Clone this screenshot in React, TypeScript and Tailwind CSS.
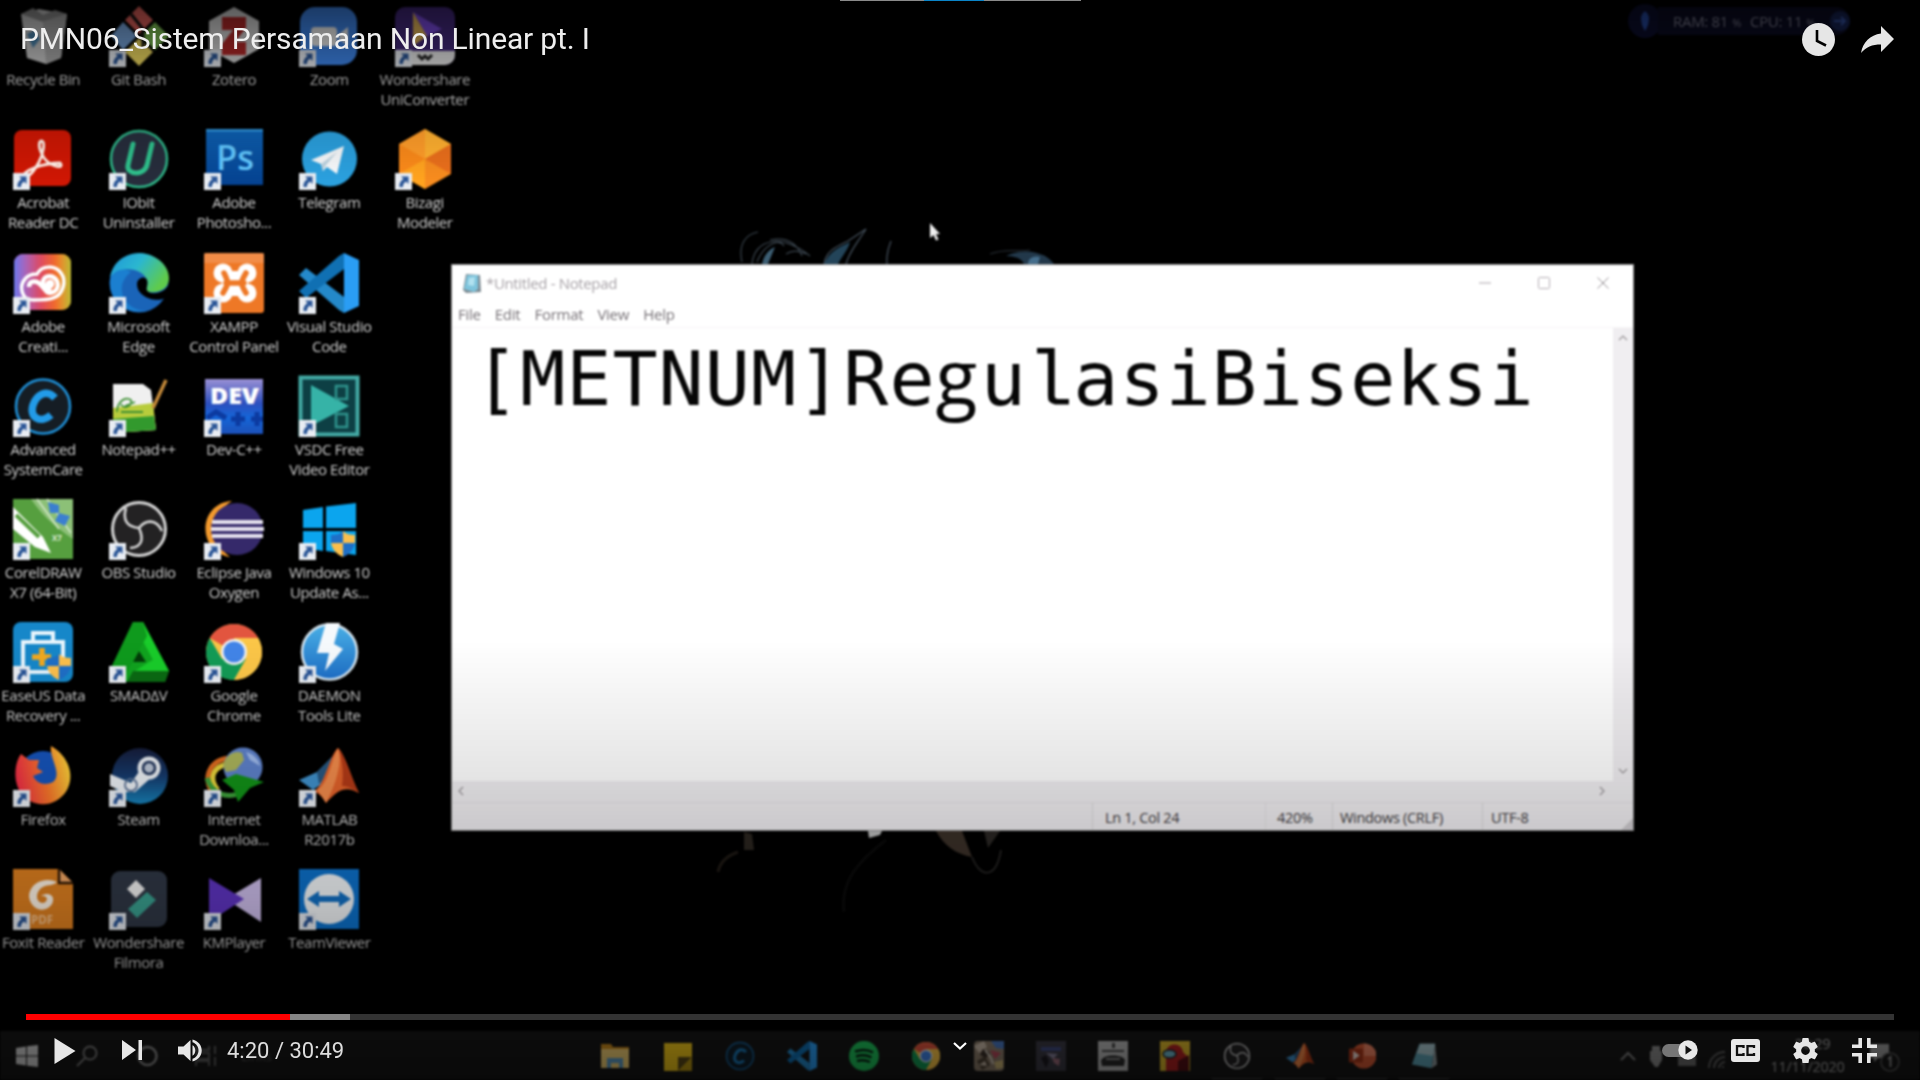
import React from "react";
import type { ReactNode } from "react";

const UI = "font-['Open_Sans','Noto_Sans',sans-serif]";

const Shield = ({ x, y, s = 1 }: { x: number; y: number; s?: number }) => (
  <g transform={`translate(${x} ${y}) scale(${s})`}>
    <path d="M12 0C9 3 5 4 0 4V12H12Z" fill="#1f6fc6" />
    <path d="M12 0C15 3 19 4 24 4V12H12Z" fill="#fbbf4c" />
    <path d="M0 12H12V26C5 23 1 18 0 12Z" fill="#fbbf4c" />
    <path d="M24 12H12V26C19 23 23 18 24 12Z" fill="#1f6fc6" />
  </g>
);

const VsCode = () => (
  <g>
    <path d="M0 22L7 15L45 44V60L40 57Z" fill="#2489ca" />
    <path d="M0 38L7 45L45 16V0L40 3Z" fill="#1070b3" />
    <path d="M45 0L60 7V53L45 60Z" fill="#2a9df4" />
  </g>
);

const Chrome = () => (
  <g>
    <circle cx="30" cy="30" r="28" fill="#f7c548" />
    <path d="M30 30L5.7 16A28 28 0 0 1 54.3 16H30Z" fill="#e2553f" />
    <path d="M5.7 16A28 28 0 0 0 30 58L42 37L30 30L18 37Z" fill="#139b56" />
    <path d="M30 58L42 37L44 30L42 20L30 16H54.3A28 28 0 0 1 30 58Z" fill="#fbc648" />
    <circle cx="30" cy="30" r="13" fill="#f1f1f1" />
    <circle cx="30" cy="30" r="10.5" fill="#4285e8" />
  </g>
);

const Obs = () => (
  <g fill="none" stroke="#d5d5d5" strokeWidth="2.6">
    <circle cx="30" cy="30" r="26.5" fill="#232223" strokeWidth="3" />
    <path d="M17 9C13 22 19 28 30 29" />
    <path d="M53 32C47 19 36 21 30 29" />
    <path d="M21 49C35 48 34 38 30 29" />
  </g>
);

const Matlab = () => (
  <g>
    <path d="M0 34L18 26L34 10L28 34L14 44Z" fill="#3f8fc9" />
    <path d="M18 26L34 10L30 30L20 38Z" fill="#27567f" />
    <path d="M14 46C26 40 30 10 39 2C46 8 52 32 60 47C48 40 40 42 27 57C24 52 20 46 14 46Z" fill="#e0612a" />
    <path d="M39 2C43 12 40 32 27 57C24 52 20 46 18 44C30 38 32 14 39 2Z" fill="#f08a4b" />
    <path d="M39 2C48 12 52 32 60 47C52 41 46 40 43 40C45 26 43 12 39 2Z" fill="#b23a17" />
  </g>
);

const art: Record<string, ReactNode> = {
  bin: (
    <g>
      <path d="M8 8L26 3L54 8L48 52L33 58L14 52Z" fill="#c9c9c9" />
      <path d="M8 8L30 16L54 8L42 4L30 9L20 2Z" fill="#8f8f8f" />
      <path d="M30 16L33 58L48 52L54 8Z" fill="#aaa" />
      <path d="M14 28L22 24L27 33L20 42Z" fill="#4b84ad" />
    </g>
  ),
  git: (
    <g>
      <path d="M30 0L44 14L30 28L16 14Z" fill="#e2625c" />
      <path d="M14 16L28 30L14 44L2 30Z" fill="#79a7de" />
      <path d="M46 16L60 30L46 44L32 30Z" fill="#7cbd52" />
      <path d="M30 32L44 46L30 60L16 46Z" fill="#f2dc62" />
      <path d="M22 8L34 23V42" stroke="#111" strokeWidth="3" fill="none" />
    </g>
  ),
  zotero: (
    <g>
      <path d="M30 1L55 15V43L30 57L5 43V15Z" fill="#d6d6d6" />
      <path d="M18 11H42V22L31 36H42V49H18V38L29 24H18Z" fill="#b52a2a" />
    </g>
  ),
  zoom: (
    <g>
      <rect x="1" y="1" width="57" height="58" rx="15" fill="#3f87ec" />
      <rect x="12" y="21" width="26" height="19" rx="4" fill="#f1f1f1" />
      <path d="M40 28L49 21V40L40 33Z" fill="#f1f1f1" />
    </g>
  ),
  uniconv: (
    <g>
      <rect x="0" y="1" width="60" height="58" rx="10" fill="#43297c" />
      <path d="M18 6L47 23L32 30Z" fill="#7b4be0" />
      <path d="M18 6V40L32 30Z" fill="#e2b45a" />
      <path d="M0 45H60V49A10 10 0 0 1 50 59H0Z" fill="#e8e8e8" />
      <path d="M23 49L27 53L30 50L33 53L37 49" stroke="#222" strokeWidth="3" fill="none" />
    </g>
  ),
  acrobat: (
    <g>
      <rect x="1" y="1" width="57" height="56" rx="8" fill="#cf1704" />
      <path
        d="M11 48C8 42 30 34 47 34C52 40 39 39 31 29C24 17 26 12 29 12C32 13 31 23 26 33C20 44 14 50 11 48Z"
        fill="none"
        stroke="#fff0e8"
        strokeWidth="2.8"
      />
    </g>
  ),
  iobit: (
    <g>
      <circle cx="30" cy="30" r="28" fill="#272d3c" stroke="#2fb588" strokeWidth="2.6" />
      <path
        d="M24 15L19 36C17 46 35 47 38 36L43 15"
        fill="none"
        stroke="#2fc08c"
        strokeWidth="5"
        strokeLinecap="round"
      />
    </g>
  ),
  ps: (
    <g>
      <rect x="2" y="0" width="57" height="56" fill="url(#psg)" />
      <rect x="2" y="0" width="57" height="2.5" fill="#2f93da" />
      <text
        x="12"
        y="41"
        fontFamily="Open Sans"
        fontWeight="600"
        fontSize="34"
        textLength="38"
        lengthAdjust="spacingAndGlyphs"
        fill="#63c8ff"
      >
        Ps
      </text>
    </g>
  ),
  telegram: (
    <g>
      <circle cx="30.500" cy="30" r="27.500" fill="#2ba0de" />
      <path d="M12 31L45 17L38 45L28 38L24 42L22 35Z" fill="#f6f8fa" />
      <path d="M22 35L38 23L27 36L24 42Z" fill="#bcd2df" />
    </g>
  ),
  bizagi: (
    <g>
      <path d="M30 0L56 15V45L30 60L4 45V15Z" fill="#f78c1f" />
      <path d="M30 0L56 15L30 30Z" fill="#ffb030" />
      <path d="M30 0L4 15L30 30Z" fill="#ff9d2a" />
      <path d="M4 15L30 30L4 45Z" fill="#fb8a1a" />
      <path d="M30 30L4 45L30 60Z" fill="#ffa31f" />
      <path d="M30 30L56 15V45Z" fill="#ea6f1c" />
    </g>
  ),
  cc: (
    <g>
      <rect x="1" y="1" width="57" height="56" rx="9" fill="url(#ccg)" />
      <rect x="1" y="1" width="57" height="56" rx="9" fill="url(#ccb)" />
      <path
        d="M20 47C8 47 6 33 12 26C15 22 20 21 24 21C29 12 42 12 48 20C54 28 50 42 40 45C36 47 26 47 20 47Z"
        fill="none"
        stroke="#fff"
        strokeWidth="3.500"
      />
      <path d="M16 34C16 27 24 27 28 32L34 39C40 42 47 36 44 28C40 21 31 22 30 29C30 32 34 36 38 38" fill="none" stroke="#fff" strokeWidth="4.500" />
      <circle cx="37" cy="31" r="4.500" fill="#fff" />
    </g>
  ),
  edge: (
    <g>
      <circle cx="30" cy="30" r="29.500" fill="#1a64b8" />
      <path d="M1 24C4 8 17 0 31 0C48 1 60 13 60 25C60 35 52 40 40 39C34 38 40 34 38 27C34 16 14 11 1 24Z" fill="url(#edg)" />
      <path d="M22 19C4 32 14 58 38 58C14 62 0 46 1 27C4 16 16 14 22 19Z" fill="#1b7fd0" />
      <path d="M60 29C62 36 57 43 57 45C46 50 28 44 28 31C28 25 36 22 38 27C40 34 34 37 42 40C52 41 59 36 60 29Z" fill="#000" />
    </g>
  ),
  xampp: (
    <g>
      <rect x="0" y="0" width="60" height="60" rx="3" fill="#ee7826" />
      <rect x="0" y="0" width="60" height="10" fill="#f39a5e" opacity=".6" />
      <rect x="18" y="18" width="26" height="25" fill="#fff" />
      <circle cx="19" cy="20" r="9.500" fill="#fff" />
      <circle cx="43" cy="20" r="9.500" fill="#fff" />
      <circle cx="19" cy="40" r="9.500" fill="#fff" />
      <circle cx="43" cy="40" r="9.500" fill="#fff" />
      <path
        d="M20 20C25 30 25 30 19 40M42 20C36 30 36 30 42 40M22 30H40"
        stroke="#ee7826"
        strokeWidth="5.500"
        strokeLinecap="round"
        fill="none"
      />
    </g>
  ),
  vscode: <VsCode />,
  asc: (
    <g>
      <circle cx="30" cy="30.500" r="27" fill="#151d24" stroke="#1f8fd6" strokeWidth="2.6" />
      <path d="M42 22C34 13 24 18 20 29C16 42 28 48 38 39" fill="none" stroke="#229be8" strokeWidth="7.500" />
    </g>
  ),
  npp: (
    <g>
      <path d="M4 8H34L42 14L47 54L4 57Z" fill="#f0f0f0" />
      <path d="M4 32L44 27L47 54L4 57Z" fill="#b8cc3c" />
      <path d="M4 43L45 40L47 54L4 57Z" fill="#32992d" />
      <path d="M8 36C8 26 16 20 22 24C24 30 14 34 12 28M12 36H34M16 30L26 26" stroke="#3c8f32" strokeWidth="1.800" fill="none" />
      <path d="M57 4L44 32" stroke="#c58a3a" strokeWidth="3.500" />
    </g>
  ),
  dev: (
    <g>
      <rect x="1" y="3" width="58" height="55" fill="url(#dvg)" />
      <text x="6" y="28" fontFamily="Open Sans" fontWeight="800" fontSize="23" textLength="49" lengthAdjust="spacingAndGlyphs" fill="#fff">
        DEV
      </text>
      <path d="M3 42L12 36L22 42M34 36V50M27 43H41M53 36V50M47 43H59" stroke="#0c3aa0" strokeWidth="5" fill="none" />
    </g>
  ),
  vsdc: (
    <g>
      <rect x="1.500" y="1.500" width="57" height="57" fill="#0d3f44" stroke="#43a9a4" strokeWidth="4" />
      <path d="M12 9L50 30L12 50Z" fill="#36b3a7" />
      <rect x="37" y="10" width="11" height="13" fill="none" stroke="#2f938c" strokeWidth="2.500" />
      <rect x="37" y="38" width="11" height="13" fill="none" stroke="#2f938c" strokeWidth="2.500" />
    </g>
  ),
  corel: (
    <g>
      <rect width="60" height="60" fill="#569f3f" />
      <path d="M18 0H60V40C45 30 30 18 18 0Z" fill="#8cc077" />
      <path d="M24 0L46 30M34 0L58 34" stroke="#c9e2bd" strokeWidth="2" />
      <path d="M0 8L30 38L38 54L22 48L0 30Z" fill="#fff" />
      <path d="M3 16L26 38" stroke="#569f3f" strokeWidth="4" />
      <path d="M35 3L46 6V14L37 14ZM46 14L57 17L52 27L42 22Z" fill="#3b7fd0" />
      <text x="39" y="42" fontFamily="Open Sans" fontWeight="700" fontSize="8" fill="#dcebd5">
        X7
      </text>
    </g>
  ),
  obs: <Obs />,
  eclipse: (
    <g>
      <path d="M28 2C-6 4 -8 52 26 58C6 44 8 14 28 2Z" fill="#f39a2d" />
      <circle cx="33" cy="30" r="26" fill="#35296a" />
      <path d="M8 23H59M7 30H60M8 37H59" stroke="#e6e2ef" strokeWidth="3.800" />
    </g>
  ),
  win10: (
    <g>
      <path d="M4 11L24 8V29H4ZM27 7.500L57 4V29H27ZM4 32H24V52L4 49ZM27 32H57V56L27 52Z" fill="#0ba5ee" />
      <Shield x={32} y={32} />
    </g>
  ),
  easeus: (
    <g>
      <rect width="60" height="60" rx="8" fill="#1687c9" />
      <path d="M20 20V11H40V20M10 20H50V50H10Z" fill="none" stroke="#e9f5fc" strokeWidth="4" />
      <path d="M29 26V44M19 35H38" stroke="#f2a91f" strokeWidth="5.500" />
      <Shield x={34} y={32} />
    </g>
  ),
  smadav: (
    <g>
      <path d="M24 0H34L60 49L56 60H18L2 46Z" fill="#11a31f" />
      <path d="M34 0L60 49H26L40 40L44 38L28 8Z" fill="#19cc2a" />
      <path d="M24 0H34L38 14L18 50L8 58L2 46Z" fill="#0f9a1d" />
      <path d="M30 29L37 40H24Z" fill="#033a08" />
      <path d="M24 49H60L56 60H18Z" fill="#0b6913" />
    </g>
  ),
  chrome: <Chrome />,
  daemon: (
    <g>
      <circle cx="30.500" cy="30" r="27.500" fill="url(#dmg)" stroke="#d9e8f2" strokeWidth="2.500" />
      <path d="M27 1H41L35 22L44 27L26 49L30 31L18 31Z" fill="#f5f9fc" />
    </g>
  ),
  firefox: (
    <g>
      <circle cx="30" cy="30" r="25" fill="#1653b8" />
      <path
        d="M8 8L16 14L26 14L24 22L30 26L20 30C24 38 32 40 40 36C50 28 36 12 38 0C56 10 62 30 54 44C42 64 16 62 6 44C0 32 2 16 8 8Z"
        fill="url(#ffg)"
      />
    </g>
  ),
  steam: (
    <g>
      <circle cx="31" cy="30" r="28" fill="url(#stg)" />
      <path d="M1 28L22 37L34 20L44 30L26 46L14 46L1 40Z" fill="#e9edf2" />
      <circle cx="40" cy="22" r="11.500" fill="#e9edf2" />
      <circle cx="40" cy="22" r="6" fill="#b8c2d2" stroke="#22355a" strokeWidth="2.500" />
      <circle cx="22" cy="39" r="6" fill="none" stroke="#5b7193" strokeWidth="1.800" />
    </g>
  ),
  idm: (
    <g>
      <g fill="none" strokeWidth="5">
        <path d="M26 12C4 14 -2 34 10 48" stroke="#dd6b20" />
        <path d="M28 17C8 20 4 32 14 44" stroke="#e5d13a" />
        <path d="M3 32C8 48 22 52 34 48" stroke="#3d9e3a" />
      </g>
      <circle cx="39" cy="21" r="19.500" fill="#5d80c8" />
      <path d="M20 16C24 7 32 4 38 7L40 14L32 24L22 26C20 22 19 20 20 16Z" fill="#a9b25a" />
      <path d="M42 6C50 8 55 14 56 20L46 14Z" fill="#9db8e8" />
      <path d="M18 34L32 28L60 36L46 42L34 56L30 44Z" fill="#129018" />
    </g>
  ),
  matlab: <Matlab />,
  foxit: (
    <g>
      <path d="M0 0H46L60 14V60H0Z" fill="#df8020" />
      <path d="M46 0V14H60" fill="#f3a765" stroke="#2b1605" strokeWidth="2.400" />
      <path d="M44 13C34 8 18 12 16 26C16 40 32 46 39 35C43 27 36 22 28 27C36 26 35 33 30 34C22 34 22 22 30 18C36 15 40 17 44 13Z" fill="#fff4e6" />
      <text x="18" y="55" fontFamily="Open Sans" fontWeight="700" fontSize="11.500" fill="#f7c38d">
        PDF
      </text>
    </g>
  ),
  filmora: (
    <g>
      <rect x="2" y="2" width="56" height="56" rx="9" fill="#303846" />
      <path d="M27 11L36 20L27 29L18 20Z" fill="#f2f2f2" />
      <path d="M38 23L47 31L28 49L19 40Z" fill="#3aa090" />
    </g>
  ),
  kmp: (
    <g>
      <path d="M57 9V53L22 30Z" fill="#cdbdeb" />
      <path d="M5 9L40 30L5 53Z" fill="#5f35c2" />
    </g>
  ),
  teamviewer: (
    <g>
      <rect width="60" height="60" fill="#0d72cc" />
      <circle cx="30" cy="30" r="25" fill="#f3f6f9" />
      <path d="M8 30L20 22V27H40V22L52 30L40 38V33H20V38Z" fill="#1270c4" />
    </g>
  ),
};

type Item = { icon: string; label: string[]; plain?: boolean };

const columns: Item[][] = [
  [
    { icon: "bin", label: ["Recycle Bin"], plain: true },
    { icon: "acrobat", label: ["Acrobat", "Reader DC"] },
    { icon: "cc", label: ["Adobe", "Creati..."] },
    { icon: "asc", label: ["Advanced", "SystemCare"] },
    { icon: "corel", label: ["CorelDRAW", "X7 (64-Bit)"] },
    { icon: "easeus", label: ["EaseUS Data", "Recovery ..."] },
    { icon: "firefox", label: ["Firefox"] },
    { icon: "foxit", label: ["Foxit Reader"] },
  ],
  [
    { icon: "git", label: ["Git Bash"] },
    { icon: "iobit", label: ["IObit", "Uninstaller"] },
    { icon: "edge", label: ["Microsoft", "Edge"] },
    { icon: "npp", label: ["Notepad++"] },
    { icon: "obs", label: ["OBS Studio"] },
    { icon: "smadav", label: ["SMADΔV"] },
    { icon: "steam", label: ["Steam"] },
    { icon: "filmora", label: ["Wondershare", "Filmora"] },
  ],
  [
    { icon: "zotero", label: ["Zotero"] },
    { icon: "ps", label: ["Adobe", "Photosho..."] },
    { icon: "xampp", label: ["XAMPP", "Control Panel"] },
    { icon: "dev", label: ["Dev-C++"] },
    { icon: "eclipse", label: ["Eclipse Java", "Oxygen"] },
    { icon: "chrome", label: ["Google", "Chrome"] },
    { icon: "idm", label: ["Internet", "Downloa..."] },
    { icon: "kmp", label: ["KMPlayer"] },
  ],
  [
    { icon: "zoom", label: ["Zoom"] },
    { icon: "telegram", label: ["Telegram"] },
    { icon: "vscode", label: ["Visual Studio", "Code"] },
    { icon: "vsdc", label: ["VSDC Free", "Video Editor"] },
    { icon: "win10", label: ["Windows 10", "Update As..."] },
    { icon: "daemon", label: ["DAEMON", "Tools Lite"] },
    { icon: "matlab", label: ["MATLAB", "R2017b"] },
    { icon: "teamviewer", label: ["TeamViewer"] },
  ],
  [
    { icon: "uniconv", label: ["Wondershare", "UniConverter"] },
    { icon: "bizagi", label: ["Bizagi", "Modeler"] },
  ],
];

const Gradients = () => (
  <svg className="absolute size-0">
    <defs>
      <linearGradient id="psg" x1="0" y1="0" x2="0" y2="1">
        <stop offset="0" stopColor="#0e62b4" />
        <stop offset="1" stopColor="#05418f" />
      </linearGradient>
      <linearGradient id="ccg" x1="0" y1="0" x2="1" y2="0">
        <stop offset="0" stopColor="#f04bb4" />
        <stop offset="0.4" stopColor="#f03a42" />
        <stop offset="0.7" stopColor="#f5532a" />
        <stop offset="1" stopColor="#f0a02c" />
      </linearGradient>
      <linearGradient id="ccb" x1="0" y1="1" x2="1" y2="1">
        <stop offset="0" stopColor="#5d7df0" stopOpacity="0.9" />
        <stop offset="0.5" stopColor="#b070c0" stopOpacity="0.25" />
        <stop offset="0.75" stopColor="#e0c030" stopOpacity="0.2" />
        <stop offset="1" stopColor="#8fc83a" stopOpacity="0.6" />
      </linearGradient>
      <linearGradient id="edg" x1="0" y1="0" x2="1" y2="0.5">
        <stop offset="0" stopColor="#1f96d8" />
        <stop offset="0.5" stopColor="#2bb7d0" />
        <stop offset="1" stopColor="#5fcb4c" />
      </linearGradient>
      <linearGradient id="dvg" x1="0" y1="0" x2="0" y2="1">
        <stop offset="0" stopColor="#9a90d4" />
        <stop offset="0.45" stopColor="#2c4fbe" />
        <stop offset="0.7" stopColor="#1566d8" />
        <stop offset="1" stopColor="#1c50b8" />
      </linearGradient>
      <linearGradient id="dmg" x1="0" y1="0" x2="0" y2="1">
        <stop offset="0" stopColor="#49aee4" />
        <stop offset="1" stopColor="#1d6fc8" />
      </linearGradient>
      <linearGradient id="ffg" x1="0" y1="0.4" x2="1" y2="0.2">
        <stop offset="0" stopColor="#ee2f45" />
        <stop offset="0.5" stopColor="#f8762a" />
        <stop offset="1" stopColor="#fbd83a" />
      </linearGradient>
      <linearGradient id="stg" x1="0" y1="0" x2="0" y2="1">
        <stop offset="0" stopColor="#161d3a" />
        <stop offset="0.5" stopColor="#163a6c" />
        <stop offset="1" stopColor="#1781b8" />
      </linearGradient>
    </defs>
  </svg>
);

const Shortcut = () => (
  <svg viewBox="0 0 17 17" className="absolute bottom-[-1px] left-0 size-[17px]">
    <rect width="17" height="17" fill="#e9edf3" />
    <path d="M6 3.500H13.500V11L11 8.500C8.500 10 8 11.500 8 14H4.500C4 10.500 5.500 8 8.500 6Z" fill="#2a5596" />
  </svg>
);

const DesktopIcon = ({ item }: { item: Item }) => (
  <div className="flex h-[123.300px] w-[95.400px] flex-col items-center">
    <div className="relative size-[60px]">
      <svg viewBox="0 0 60 60" className="size-[60px] overflow-visible">
        {art[item.icon]}
      </svg>
      {!item.plain && <Shortcut />}
    </div>
    <div className="mt-[3px] flex flex-col items-center whitespace-nowrap text-[15px] leading-[20px] tracking-[-0.400px] text-[#cfcfcf]">
      {item.label.map((l) => (
        <span key={l}>{l}</span>
      ))}
    </div>
  </div>
);

const Wallpaper = () => (
  <svg viewBox="0 0 1920 1080" className="absolute inset-0 size-full" fill="none">
    <g stroke="#46525e" strokeWidth="1.200">
      <path d="M742 262C738 244 746 234 758 232M752 264C754 240 780 232 810 256M757 262C764 244 780 238 784 246M770 240C790 236 798 246 802 256M786 254C792 250 798 250 806 254" opacity=".8" />
      <path d="M824 264C826 250 838 246 848 241L866 229C858 242 850 250 846 264" />
      <path d="M887 264C886 254 889 246 891 241" />
      <path d="M990 254C1004 248 1018 252 1030 250" opacity=".5" />
    </g>
    <path d="M824 264C830 250 842 246 850 242C848 250 842 256 838 264Z" fill="#234459" />
    <path d="M762 264C764 254 770 249 775 247L768 264Z" fill="#3d5f74" />
    <path d="M1006 256C1024 247 1046 252 1054 264H1024C1022 258 1014 256 1006 256Z" fill="#22384a" />
    <path d="M1028 264C1028 258 1034 255 1040 257L1038 264Z" fill="#4f7c9c" opacity=".8" />
    <path d="M868 831H882L880 835L869 838Z" fill="#b9baba" />
    <path d="M936 831H962L972 857C956 854 944 846 936 831Z" fill="#3a3028" />
    <path d="M984 831H1000L988 848Z" fill="#2a2724" />
    <path d="M972 857C980 878 996 880 1001 850" stroke="#232221" strokeWidth="2" />
    <path d="M744 832L752 834L754 850L744 850Z" fill="#2a251f" />
    <path d="M738 852C726 856 720 862 718 872" stroke="#1f1a15" strokeWidth="3" />
    <path d="M886 840C860 860 840 880 844 912" stroke="#0b0b0b" strokeWidth="3" />
  </svg>
);

const Notepad = () => (
  <section className="absolute left-[451px] top-[264px] flex h-[567px] w-[1183px] flex-col border border-[#8a8a8a] bg-white text-[#8b868b]">
    <header className="flex h-[37px] items-center pl-[10px] text-[15px]">
      <svg viewBox="0 0 20 21" className="h-[21px] w-[20px]">
        <path d="M4 1L18 2L19 19L4 20L1 17Z" fill="#7d8b93" />
        <path d="M5 2H16V16L12 19L2 16Z" fill="#7ec4dc" />
        <path d="M7 5L13 4L12 13L6 12Z" fill="#b2e2f0" />
      </svg>
      <span className="ml-[4px] w-[132px] whitespace-nowrap pb-[1px] tracking-[-0.350px] text-[#a8a3a8]">*Untitled - Notepad</span>
      <div className="ml-auto flex items-center gap-[47px] pb-[1px] pr-[24px]">
        <svg viewBox="0 0 12 12" className="size-[12px]" stroke="#aaa4aa" fill="none">
          <path d="M0 6H12" />
        </svg>
        <svg viewBox="0 0 12 12" className="size-[12px]" stroke="#b3adb3" fill="none">
          <rect x=".5" y=".5" width="11" height="11" rx="1" />
        </svg>
        <svg viewBox="0 0 12 12" className="size-[12px]" stroke="#958f95" fill="none">
          <path d="M.5 .5L11.500 11.500M11.500 .5L.5 11.500" />
        </svg>
      </div>
    </header>
    <nav className="flex h-[25px] items-center gap-[14px] pl-[6px] text-[15px] tracking-[-0.250px] text-[#777277]">
      <span>File</span>
      <span>Edit</span>
      <span>Format</span>
      <span>View</span>
      <span>Help</span>
    </nav>
    <div className="flex min-h-0 flex-1 border-t border-[#f6f4f6]">
      <div className="flex-1 whitespace-nowrap pl-[22px] pt-[2px] font-['DejaVu_Sans_Mono',monospace] text-[75px] leading-[98px] tracking-[1px] text-[#060606]">
        [METNUM]Re
        <span className="font-['Open_Sans',sans-serif] text-[77px] leading-[0px] tracking-[3.500px]">g</span>u
        <span className="font-['Liberation_Mono',monospace] text-[77px] font-normal leading-[0px] tracking-[0px]">l</span>
        asiBiseksi
      </div>
      <div className="flex w-[20px] flex-col items-center justify-between bg-[#f0eef1] py-[7px] text-[#9a979a]">
        <svg viewBox="0 0 10 6" className="h-[6px] w-[10px]" fill="none" stroke="currentColor" strokeWidth="1.200">
          <path d="M1 5L5 1L9 5" />
        </svg>
        <svg viewBox="0 0 10 6" className="h-[6px] w-[10px]" fill="none" stroke="currentColor" strokeWidth="1.200">
          <path d="M1 1L5 5L9 1" />
        </svg>
      </div>
    </div>
    <div className="flex h-[21px] items-center justify-between bg-[#f0eef1] pb-[1px] pl-[6px] pr-[28px] text-[#9a979a]">
      <svg viewBox="0 0 6 10" className="h-[10px] w-[6px]" fill="none" stroke="currentColor" strokeWidth="1.200">
        <path d="M5 1L1 5L5 9" />
      </svg>
      <svg viewBox="0 0 6 10" className="h-[10px] w-[6px]" fill="none" stroke="currentColor" strokeWidth="1.200">
        <path d="M1 1L5 5L1 9" />
      </svg>
    </div>
    <footer className="relative flex h-[28px] items-stretch border-t border-[#e4e1e4] bg-[#f0eef1] text-[14.500px] leading-[29px] tracking-[-0.300px] text-[#3f3c3f]">
      <span className="ml-[640px] w-[173px] border-l border-[#dcd9dc] pl-[12px]">Ln 1, Col 24</span>
      <span className="w-[67px] border-l border-[#e6e3e6] pl-[11px]">420%</span>
      <span className="w-[150px] border-l border-[#dcd9dc] pl-[7px]">Windows (CRLF)</span>
      <span className="border-l border-[#dcd9dc] pl-[8px]">UTF-8</span>
      <svg viewBox="0 0 12 12" className="absolute bottom-0 right-0 size-[12px]">
        <path d="M12 0V12H0Z" fill="#cfccd0" />
      </svg>
    </footer>
  </section>
);

const taskIcons: ReactNode[] = [
  <g key="files">
    <path d="M2 6H22L26 12H58V54H2Z" fill="#c98a1c" />
    <path d="M2 16H58V54H2Z" fill="#f1cf74" />
    <path d="M14 54V34H46V54H38V44H22V54Z" fill="#5f9cc4" />
  </g>,
  <g key="notes">
    <path d="M2 4H58V60H2Z" fill="#f2c81a" />
    <path d="M30 60V32H58Z" fill="#5a4a18" />
    <path d="M30 60L58 32V60Z" fill="#b99712" />
  </g>,
  <g key="asc">
    <circle cx="30" cy="30" r="27" fill="#11202b" stroke="#17629a" strokeWidth="3" />
    <path d="M42 22C34 13 24 18 20 29C16 42 28 48 38 39" fill="none" stroke="#1b79b8" strokeWidth="6" />
  </g>,
  <VsCode key="code" />,
  <g key="spotify">
    <circle cx="30" cy="30" r="30" fill="#1fc25b" />
    <path d="M12 21C26 16 38 17 48 23M14 31C26 27 36 28 45 33M16 40C26 37 34 38 42 42" fill="none" stroke="#0a2415" strokeWidth="5" />
  </g>,
  <Chrome key="chrome" />,
  <g key="game1">
    <rect width="60" height="60" rx="8" fill="#8d7d6b" />
    <path d="M0 10L20 0L26 12L10 24Z" fill="#c9b9a8" />
    <path d="M34 0H60V16L44 14Z" fill="#4a78c0" />
    <path d="M32 18L54 24L42 36Z" fill="#b5485a" />
    <path d="M6 40L22 30L32 48L16 58Z" fill="#4f4335" />
    <path d="M10 48L22 40L26 50Z" fill="#c9b9a8" />
    <path d="M40 42L58 38V54L44 56Z" fill="#c9b374" />
    <path d="M18 16L32 24L24 34L12 28Z" fill="#3a2f28" />
    <path d="M22 18L34 34L38 46" stroke="#e5dccf" strokeWidth="3" fill="none" />
  </g>,
  <g key="game2">
    <rect width="60" height="60" fill="#3b3a44" />
    <path d="M10 12H50V20H10Z" fill="#3f4a80" />
    <path d="M10 34L20 28L26 40L20 54Z" fill="#1c1a20" />
    <path d="M32 34L48 36L46 50L36 44Z" fill="#9a6a78" />
    <path d="M20 24L44 26L34 36Z" fill="#85809a" />
  </g>,
  <g key="game3">
    <rect width="60" height="60" fill="#b7b7b7" />
    <path d="M8 18H52V22H8ZM28 4H34V14H28Z" fill="#4a4a4a" />
    <path d="M6 40C10 26 48 26 54 38L52 50H8Z" fill="#2a2a2a" />
    <path d="M16 34H44V38H16Z" fill="#8a8a8a" />
  </g>,
  <g key="game4">
    <rect width="60" height="60" fill="#d9b52b" />
    <path d="M12 60V22C14 2 44 2 46 22L56 32V60Z" fill="#b02222" />
    <path d="M36 40L58 28V60H36Z" fill="#541116" />
    <ellipse cx="19" cy="26" rx="13" ry="8" fill="#6fb6c9" stroke="#22282c" strokeWidth="3" />
  </g>,
  <Obs key="obs" />,
  <Matlab key="matlab" />,
  <g key="ppt">
    <circle cx="34" cy="30" r="27" fill="#d75a35" />
    <path d="M34 3A27 27 0 0 1 61 30H34Z" fill="#ef8463" />
    <rect x="2" y="14" width="30" height="30" rx="3" fill="#a8371a" />
    <path d="M11 19L25 29L11 39Z" fill="#f4e2dc" />
  </g>,
  <g key="notepad">
    <path d="M20 4L54 4L46 56L4 48Z" fill="#5fa3b5" />
    <path d="M22 4L54 4L50 30L14 24Z" fill="#a9c8cf" />
    <path d="M54 6L58 48L46 56Z" fill="#8f9a9d" />
  </g>,
];

const Taskbar = () => (
  <footer className="absolute inset-x-0 bottom-0 flex h-[49px] items-center bg-[#171717] text-[#b8b8b8]">
    <div className="flex w-[584.400px] items-center pl-[16px]">
      <svg viewBox="0 0 22 22" className="size-[22px]" fill="#cfcfcf">
        <path d="M0 3L10 1.500V10.500H0ZM11 1.300L22 0V10.500H11ZM0 11.500H10V20.500L0 19ZM11 11.500H22V22L11 20.700Z" />
      </svg>
      <svg viewBox="0 0 22 22" className="ml-[38px] size-[22px]" fill="none" stroke="#7a7a7a" strokeWidth="2">
        <circle cx="14" cy="8" r="6.500" />
        <path d="M9 13L1 21" />
      </svg>
      <svg viewBox="0 0 22 22" className="ml-[38px] size-[22px]" fill="none" stroke="#8a8a8a" strokeWidth="2.600">
        <circle cx="11.500" cy="11" r="9" />
      </svg>
      <svg viewBox="0 0 24 22" className="ml-[37px] h-[22px] w-[24px]" fill="none" stroke="#5b5b5b" strokeWidth="2">
        <path d="M1 1V5H14V1M1 21V16H14V21M2 8H14V14H2ZM20 1V9M20 12V21" />
      </svg>
      <span className="ml-[22px] pt-[3px] text-[13px] text-[#4c4c4c]">Links</span>
    </div>
    <div className="flex h-full">
      {taskIcons.map((t, i) => (
        <div
          key={i}
          className={
            i > 9
              ? "flex h-full w-[62.200px] flex-col items-center justify-end"
              : "flex h-full w-[62.200px] items-center justify-center"
          }
        >
          <svg viewBox="0 0 60 60" className={i > 9 ? "mb-[8px] size-[28px]" : "mt-[1px] size-[30px]"}>
            {t}
          </svg>
          {i > 9 && <div className="h-[2px] w-[50px] bg-[#303030]" />}
        </div>
      ))}
    </div>
    <div className="ml-auto flex h-full items-center pr-[20px]">
      <svg viewBox="0 0 16 10" className="mr-[-2px] h-[10px] w-[16px]" fill="none" stroke="#828282" strokeWidth="2">
        <path d="M1 9L8 2L15 9" />
      </svg>
      <svg viewBox="0 0 12 22" className="ml-[16px] h-[22px] w-[12px]" fill="#8b8b8b">
        <path d="M2 1H10V6H12V15L8 22H5L0 15V6H2Z" />
      </svg>
      <svg viewBox="0 0 18 14" className="ml-[16px] mt-[10px] h-[14px] w-[18px]" fill="#6a6a6a">
        <path d="M0 2H18V12H0Z" />
      </svg>
      <svg viewBox="0 0 18 18" className="ml-[12px] mt-[8px] size-[18px]" fill="none" stroke="#5e5e5e" strokeWidth="2">
        <path d="M1 17C1 8 8 1 17 1M6 17C6 11 11 6 17 6M11 17C11 14 14 11 17 11M15 15V17" />
      </svg>
      <div className="ml-[43px] flex w-[77px] flex-col items-center whitespace-nowrap pb-[1px] text-[14.500px] leading-[23px] tracking-[-0.300px] text-[#a6a6a6]">
        <span className="pl-[10px]">20:29</span>
        <span>11/11/2020</span>
      </div>
      <svg viewBox="0 0 32 32" className="ml-[22px] size-[32px]" fill="none">
        <path d="M2 4H21V18H10L6 22V18H2Z" fill="#9a9a9a" />
        <circle cx="22" cy="22" r="9" fill="#171717" stroke="#555" strokeWidth="1.500" />
        <path d="M20 19L22.500 17V27" stroke="#8b8b8b" strokeWidth="2" />
      </svg>
    </div>
  </footer>
);

const Monitor = () => (
  <aside className="absolute left-[1628px] top-[4px] flex h-[34px] w-[222px] items-center">
    <div className="flex size-[34px] items-center justify-center rounded-full bg-[#0c0e2c]">
      <svg viewBox="0 0 14 20" className="h-[20px] w-[14px]">
        <path d="M7 0C10 2 11 5 11 8L10 14L7 20L4 14L3 8C3 5 4 2 7 0Z" fill="#25479c" />
      </svg>
    </div>
    <div className="-ml-[4px] flex h-[28px] flex-1 items-center rounded-r-full bg-[#0b0c22] pl-[15px] text-[15px] tracking-[-0.300px] text-[#77778a]">
      <span className="w-[70px] whitespace-nowrap">
        RAM: 81<span className="pl-[4px] text-[11px]">%</span>
      </span>
      <span className="ml-[7px] whitespace-nowrap">
        CPU: 11<span className="pl-[4px] text-[11px]">%</span>
      </span>
      <svg viewBox="0 0 20 20" className="ml-auto size-[20px]" fill="none">
        <circle cx="10" cy="10" r="10" fill="#16224f" />
        <path d="M4 10H15M11 6L15 10L11 14" stroke="#34509f" strokeWidth="2" />
      </svg>
    </div>
  </aside>
);

const Controls = () => (
  <div className="absolute inset-x-0 bottom-0 flex h-[66px] flex-col font-['Roboto',sans-serif] text-[#e6e6e6]">
    <div className="mx-[26px] flex h-[6px] bg-[#333]">
      <div className="w-[263.700px] bg-[#f00]" />
      <div className="w-[60px] bg-[#858585]" />
    </div>
    <div className="flex h-[60px] items-center">
      <svg viewBox="0 0 22 26" className="ml-[54px] mt-[2px] h-[26px] w-[22px]" fill="currentColor">
        <path d="M.5 0L21.500 13L.5 26Z" />
      </svg>
      <svg viewBox="0 0 20 20" className="ml-[46px] size-[20px]" fill="currentColor">
        <path d="M0 0L14 10L0 20ZM16.500 0H20V20H16.500Z" />
      </svg>
      <svg viewBox="0 0 24 23" className="ml-[36px] h-[23px] w-[24px]" fill="currentColor">
        <path d="M0 7.500H5.500L12.500 1V22L5.500 15.500H0Z" />
        <path d="M14.500 6.200C18 7.800 18.500 14.800 14.500 16.800ZM14.500 .5C26.800 3.500 26.800 19.500 14.500 22.500V19.800C22.500 17 22.500 6 14.500 3.200Z" />
      </svg>
      <span className="ml-[25px] w-[120px] whitespace-nowrap text-[22px] text-[#ddd]">4:20 / 30:49</span>
      <svg viewBox="0 0 14 8" className="mb-[8px] ml-[606px] h-[8px] w-[14px]" fill="none" stroke="#fff" strokeWidth="2.200">
        <path d="M1 1L7 6.500L13 1" />
      </svg>
      <svg viewBox="0 0 36 20" className="ml-auto h-[20px] w-[36px]">
        <rect x="0" y="4" width="30" height="13" rx="6.500" fill="#767676" />
        <circle cx="26" cy="10" r="9.700" fill="#e8e8e8" />
        <path d="M23.500 5.500L30 10L23.500 14.500Z" fill="#111" />
      </svg>
      <svg viewBox="0 0 29 23" className="ml-[33px] h-[23px] w-[29px]">
        <rect width="29" height="23" rx="3" fill="#e8e8e8" />
        <path d="M12.500 9V7.200H6V15.800H12.500V14M23 9V7.200H16.500V15.800H23V14" fill="none" stroke="#111" strokeWidth="2.300" />
      </svg>
      <svg viewBox="2.200 2 19.600 20" className="ml-[33px] size-[25px]" fill="currentColor">
        <path d="M19.430 12.980c.04-.32.07-.64.07-.98s-.03-.66-.07-.98l2.110-1.650c.19-.15.24-.42.12-.64l-2-3.460c-.12-.22-.39-.3-.61-.22l-2.490 1c-.52-.4-1.080-.73-1.690-.98l-.38-2.650C14.460 2.180 14.250 2 14 2h-4c-.25 0-.46.18-.49.42l-.38 2.650c-.61.25-1.170.59-1.690.98l-2.490-1c-.23-.09-.49 0-.61.22l-2 3.460c-.13.22-.07.49.12.64l2.110 1.650c-.04.32-.07.65-.07.98s.03.66.07.98l-2.110 1.650c-.19.15-.24.42-.12.64l2 3.460c.12.22.39.3.61.22l2.490-1c.52.4 1.080.73 1.690.98l.38 2.650c.03.24.24.42.49.42h4c.25 0 .46-.18.49-.42l.38-2.650c.61-.25 1.170-.59 1.690-.98l2.490 1c.23.09.49 0 .61-.22l2-3.460c.12-.22.07-.49-.12-.64l-2.110-1.650zM12 15.500c-1.930 0-3.500-1.570-3.500-3.500s1.570-3.500 3.500-3.500 3.500 1.570 3.500 3.500-1.570 3.500-3.500 3.500z" />
      </svg>
      <svg viewBox="0 0 25 25" className="ml-[34px] mr-[43px] size-[25px]" fill="none" stroke="currentColor" strokeWidth="3.600">
        <path d="M0 8.200H8.200V0M16.800 0V8.200H25M25 16.800H16.800V25M8.200 25V16.800H0" />
      </svg>
    </div>
  </div>
);

export default function App() {
  return (
    <main className="relative h-[1080px] w-[1920px] overflow-hidden bg-black">
      <Gradients />
      <div className={`absolute inset-0 blur-[0.900px] ${UI}`}>
        <Wallpaper />
        <div className="absolute -left-[4.500px] top-[6px] flex">
          {columns.map((c, i) => (
            <div key={i} className="flex flex-col">
              {c.map((item) => (
                <DesktopIcon key={item.icon} item={item} />
              ))}
            </div>
          ))}
        </div>
        <Monitor />
        <Notepad />
        <svg viewBox="0 0 12 18" className="absolute left-[930px] top-[223px] h-[18px] w-[12px]">
          <path d="M0 0L10 11H6L8.500 16.500L6 17.500L3.500 12L0 15Z" fill="#f0f0f0" />
        </svg>
        <Taskbar />
      </div>
      <div className="absolute inset-x-0 top-0 h-[180px] bg-[linear-gradient(to_bottom,rgba(0,0,0,.6)_0px,rgba(0,0,0,.32)_60px,rgba(0,0,0,.14)_110px,transparent_180px)]" />
      <div className="absolute inset-x-0 bottom-0 h-[440px] bg-[linear-gradient(to_bottom,transparent_0px,rgba(0,0,0,.04)_50px,rgba(0,0,0,.105)_140px,rgba(0,0,0,.22)_260px,rgba(0,0,0,.38)_360px,rgba(0,0,0,.58)_440px)]" />
      <div className="absolute left-[840px] top-0 flex h-[1px] w-[241px] bg-[#8a8a8a]">
        <div className="ml-[84px] w-[60px] bg-[#0a84c8]" />
      </div>
      <header className="absolute inset-x-0 top-0 flex h-[78px] items-center pl-[20px] font-['Roboto',sans-serif] text-[#eee]">
        <h1 className="whitespace-nowrap text-[30px] leading-[40px] tracking-[-0.160px]">PMN06_Sistem Persamaan Non Linear pt. I</h1>
        <svg viewBox="0 0 33 33" className="ml-auto size-[33px]">
          <circle cx="16.500" cy="16.500" r="16.500" fill="#e6e6e6" />
          <path d="M15 7V18L24 22.500" fill="none" stroke="#000" strokeWidth="2.600" />
        </svg>
        <svg viewBox="0 0 33 27" className="ml-[26px] mr-[26px] h-[27px] w-[33px]" fill="#e6e6e6">
          <path d="M20 0L33 13L20 26V18.500C11 18.500 5 21 0 27C2 16 9 9 20 7.500Z" />
        </svg>
      </header>
      <Controls />
    </main>
  );
}
